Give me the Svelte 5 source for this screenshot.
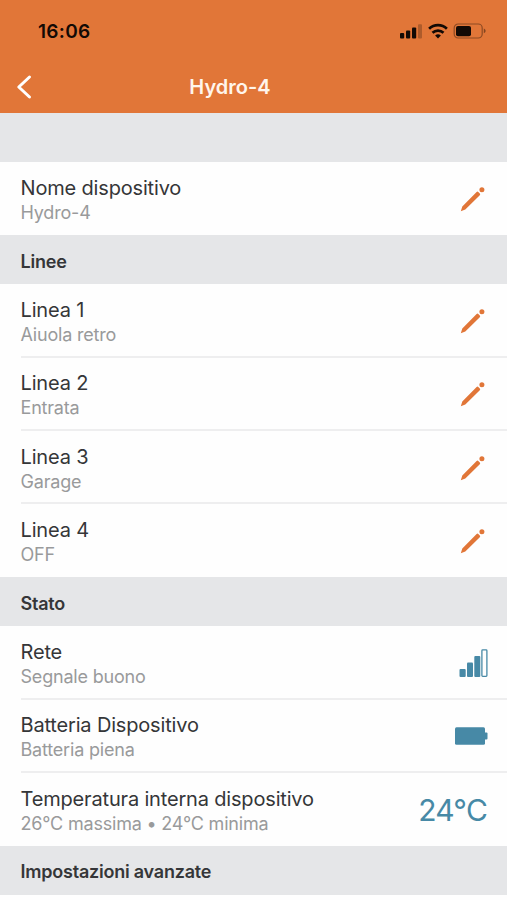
<script lang="ts">
	type Icon = 'edit' | 'signal' | 'battery';
	type Row = { title: string; detail: string; icon?: Icon; value?: string };
	type Section = { heading: string; rows: Row[] };

	const sections: Section[] = [
		{
			heading: '',
			rows: [{ title: 'Nome dispositivo', detail: 'Hydro-4', icon: 'edit' }]
		},
		{
			heading: 'Linee',
			rows: [
				{ title: 'Linea 1', detail: 'Aiuola retro', icon: 'edit' },
				{ title: 'Linea 2', detail: 'Entrata', icon: 'edit' },
				{ title: 'Linea 3', detail: 'Garage', icon: 'edit' },
				{ title: 'Linea 4', detail: 'OFF', icon: 'edit' }
			]
		},
		{
			heading: 'Stato',
			rows: [
				{ title: 'Rete', detail: 'Segnale buono', icon: 'signal' },
				{ title: 'Batteria Dispositivo', detail: 'Batteria piena', icon: 'battery' },
				{
					title: 'Temperatura interna dispositivo',
					detail: '26°C massima • 24°C minima',
					value: '24°C'
				}
			]
		},
		{ heading: 'Impostazioni avanzate', rows: [] }
	];
</script>

<div class="screen">
	<header>
		<div class="status-bar">
			<span class="time">16:06</span>
			<svg class="indicators" width="88" height="20" viewBox="0 0 88 20" aria-hidden="true">
				<rect x="1" y="12" width="4.2" height="5.5" rx="1" />
				<rect x="7" y="9.5" width="4.2" height="8" rx="1" />
				<rect x="13" y="6.5" width="4.2" height="11" rx="1" />
				<rect x="19" y="3.2" width="4" height="14.3" rx="1" opacity="0.25" />
				<g fill="none" stroke="#120a05" stroke-width="2.7">
					<path d="M30.1 7.7a13 13 0 0 1 17.8 0" />
					<path d="M33.5 11.8a8 8 0 0 1 11 0" />
				</g>
				<path d="M39 17.6l-2.9-3a4.2 4.2 0 0 1 5.8 0z" />
				<rect x="55.2" y="3" width="28" height="14" rx="4" fill="none" stroke="#120a05" stroke-opacity="0.4" stroke-width="1.2" />
				<rect x="57" y="5" width="15" height="10.2" rx="2" />
				<path d="M84.8 7.5c2.4 1 2.4 3.8 0 4.8z" opacity="0.45" />
			</svg>
		</div>
		<nav>
			<button class="back" aria-label="Indietro">
				<svg width="16" height="26" viewBox="0 0 16 26">
					<path d="M13.5 3L2.8 13l10.7 10" fill="none" stroke="#fff" stroke-width="3" stroke-linecap="round" stroke-linejoin="round" />
				</svg>
			</button>
			<h1>Hydro-4</h1>
		</nav>
	</header>

	<main>
		{#each sections as section}
			<section>
				<h2>{section.heading}</h2>
				{#each section.rows as row (row.title)}
					<div class="row">
						<div class="text">
							<div class="title">{row.title}</div>
							<div class="detail">{row.detail}</div>
						</div>
						{#if row.icon === 'edit'}
							<svg class="edit" width="26" height="26" viewBox="0 0 26 26">
								<path d="M0.8 25.2l1.5-4.8L16.6 6a1.2 1.2 0 0 1 1.7 0l1.5 1.5a1.2 1.2 0 0 1 0 1.7L5.3 23.4z" />
								<circle cx="21.9" cy="3.8" r="2.5" />
							</svg>
						{:else if row.icon === 'signal'}
							<svg class="signal" width="29" height="29" viewBox="0 0 29 29">
								<rect x="0.5" y="20" width="6.2" height="8" rx="1" />
								<rect x="8" y="13.5" width="6" height="14.5" rx="1" />
								<rect x="15.3" y="7" width="6" height="21" rx="1" />
								<rect x="22.9" y="0.9" width="5" height="26.5" rx="0.8" fill="none" stroke="#4789a6" stroke-width="1.3" />
							</svg>
						{:else if row.icon === 'battery'}
							<svg width="34" height="18" viewBox="0 0 34 18">
								<rect x="1" y="0.3" width="30" height="17.4" rx="1.5" />
								<rect x="30" y="5.5" width="3.5" height="7" rx="1" />
							</svg>
						{:else if row.value}
							<span class="value">{row.value}</span>
						{/if}
					</div>
				{/each}
			</section>
		{/each}
	</main>
</div>

<style>
	:global(body) {
		background: #fff;
	}
	.screen {
		height: 900px;
		overflow: hidden;
		background: #fefefe;
		color: #353638;
		font-family: Inter, 'Liberation Sans', sans-serif;
	}
	header {
		height: 113.2px;
		background: #e17638;
	}
	.status-bar {
		display: flex;
		justify-content: space-between;
		align-items: center;
		height: 62px;
		padding: 0 20px 0 38px;
	}
	.time {
		color: #120a05;
		font-size: 19px;
		font-weight: 600;
		letter-spacing: 0.3px;
	}
	nav {
		display: grid;
		grid-template-columns: 47px 1fr 94px;
		align-items: center;
		height: 50px;
	}
	.back {
		display: flex;
		padding: 0 0 0 16px;
		border: none;
		background: none;
	}
	h1 {
		margin: 0;
		color: #fff5ec;
		font-size: 20px;
		font-weight: 600;
		line-height: 24px;
		text-align: center;
	}
	h2 {
		display: flex;
		align-items: center;
		box-sizing: border-box;
		height: 48.9px;
		margin: 0;
		padding: 2.5px 0 0 20.5px;
		background: #e5e6e8;
		font-size: 18px;
		font-weight: 600;
		letter-spacing: -0.22px;
	}
	.row {
		display: flex;
		justify-content: space-between;
		align-items: center;
		height: 73.3px;
		margin-left: 20.5px;
		padding-right: 19px;
	}
	.row:not(:last-child) {
		box-shadow: inset 0 -2px #eeeeef;
	}
	.text {
		padding-top: 2px;
	}
	.title {
		font-size: 20px;
		line-height: 25px;
		letter-spacing: -0.17px;
	}
	.detail {
		padding-top: 1px;
		color: #999a9b;
		font-size: 18px;
		line-height: 22px;
		letter-spacing: -0.19px;
	}
	svg {
		display: block;
		fill: #4789a6;
	}
	.indicators {
		fill: #120a05;
	}
	.edit {
		margin-right: 2px;
		fill: #e17638;
	}
	.signal {
		margin-top: 1px;
	}
	.value {
		margin-right: 1px;
		color: #4789a6;
		font-size: 30px;
		line-height: 36px;
		letter-spacing: -0.8px;
	}
</style>
